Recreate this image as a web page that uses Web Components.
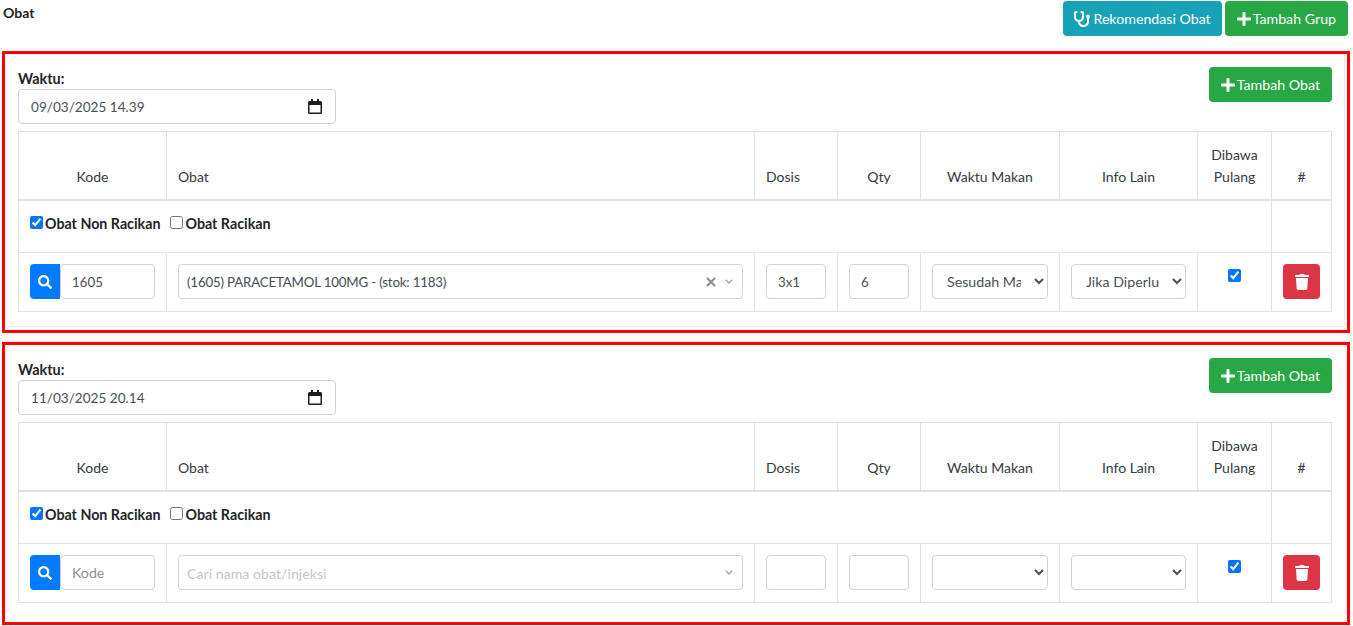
<!DOCTYPE html>
<html lang="id">
<head>
<meta charset="utf-8">
<title>Obat</title>
<style>
  html, body { margin: 0; background: #fff; }
  body { font-family: Lato, "Noto Sans", "Liberation Sans", sans-serif; font-size: 14px; color: #212529; }
</style>
</head>
<body>

<obat-page>
  <app-button slot="actions" variant="info" icon="stethoscope">Rekomendasi Obat</app-button>
  <app-button slot="actions" variant="success" icon="plus">Tambah Grup</app-button>

  <obat-group
    card-edge
    waktu="09/03/2025 14.39"
    kode="1605"
    obat="(1605) PARACETAMOL 100MG - (stok: 1183)"
    dosis="3x1"
    qty="6"
    makan="Sesudah Makan"
    info="Jika Diperlu"></obat-group>

  <obat-group waktu="11/03/2025 20.14"></obat-group>
</obat-page>

<script>
const iconPaths = Object.freeze({
  plus: [448, 'M416 208H272V64c0-17.67-14.33-32-32-32h-32c-17.67 0-32 14.33-32 32v144H32c-17.67 0-32 14.33-32 32v32c0 17.67 14.33 32 32 32h144v144c0 17.67 14.33 32 32 32h32c17.67 0 32-14.33 32-32V304h144c17.67 0 32-14.33 32-32v-32c0-17.67-14.33-32-32-32z'],
  search: [512, 'M505 442.7L405.3 343c-4.5-4.5-10.6-7-17-7H372c27.6-35.3 44-79.7 44-128C416 93.1 322.9 0 208 0S0 93.1 0 208s93.1 208 208 208c48.3 0 92.7-16.4 128-44v16.3c0 6.4 2.5 12.5 7 17l99.7 99.7c9.4 9.4 24.6 9.4 33.9 0l28.3-28.3c9.4-9.4 9.4-24.6.1-34zM208 336c-70.7 0-128-57.2-128-128 0-70.7 57.2-128 128-128 70.7 0 128 57.2 128 128 0 70.7-57.2 128-128 128z'],
  trash: [448, 'M432 32H312l-9.4-18.7A24 24 0 0 0 281.1 0H166.8a23.72 23.72 0 0 0-21.4 13.3L136 32H16A16 16 0 0 0 0 48v32a16 16 0 0 0 16 16h416a16 16 0 0 0 16-16V48a16 16 0 0 0-16-16zM53.2 467a48 48 0 0 0 47.9 45h245.8a48 48 0 0 0 47.9-45L416 128H32z'],
  stethoscope: [512, 'M447.1 112c-34.2.5-62.3 28.4-63 62.6-.5 24.3 12.5 45.6 32 56.8V344c0 57.3-50.2 104-112 104-60 0-109.2-44.1-111.9-99.2C265 333.8 320 269.2 320 192V36.6c0-11.4-8.1-21.3-19.3-23.5L237.8.5c-13-2.6-25.6 5.8-28.2 18.8L206.4 35c-2.6 13 5.8 25.6 18.8 28.2l30.7 6.1v121.4c0 52.9-42.2 96.7-95.1 97.2-53.4.5-96.8-42.7-96.8-96V69.4l30.7-6.1c13-2.6 21.4-15.2 18.8-28.2l-3.1-15.7C107.7 6.4 95.1-2 82.1.6L19.3 13C8.1 15.3 0 25.1 0 36.6V192c0 77.3 55.1 142 128.1 156.8C130.7 439.2 208.6 512 304 512c97 0 176-75.4 176-168V231.4c19.1-11.1 32-31.7 32-55.4 0-35.7-29.2-64.5-64.9-64zm.9 80c-8.800 0-16-7.200-16-16s7.200-16 16-16 16 7.200 16 16-7.200 16-16 16z']
})

const iconSvg = (name, size) => {
  const [w, d] = iconPaths[name]
  return `<svg width="${size * w / 512}" height="${size}" viewBox="0 0 ${w} 512" fill="currentColor" aria-hidden="true"><path d="${d}"/></svg>`
}

class AppButton extends HTMLElement {
  connectedCallback () {
    if (this.shadowRoot) return
    this.attachShadow({ mode: 'open' })
    const icon = this.getAttribute('icon')
    this.shadowRoot.innerHTML = `
      <style>
        :host {
          display: inline-flex;
          align-items: center;
          height: 35px;
          box-sizing: border-box;
          padding: 0 12px;
          gap: 2px;
          border-radius: 4px;
          color: #fff;
          font-size: 14.2px;
          white-space: nowrap;
        }
        :host([variant="info"]) { background: #17a2b8; padding: 0 11px; gap: 3px; }
        :host([variant="success"]) { background: #28a745; }
        svg { display: block; }
      </style>
      ${icon ? iconSvg(icon, 16) : ''}<slot></slot>
    `
  }
}

const groupTemplate = document.createElement('template')
groupTemplate.innerHTML = `
  <style>
    :host {
      display: block;
      box-sizing: border-box;
      height: 283px;
      border: 3px solid #f00;
      box-shadow: 0 -1.5px 0 #e6e8ea;
    }
    :host([card-edge]) { height: 282px; box-shadow: none; }
    .card {
      box-sizing: border-box;
      height: 100%;
      padding: 13px 13px 0 13px;
      margin-right: 2px;
    }
    :host([card-edge]) .card {
      height: 273px;
      padding-right: 12px;
      border-right: 1px solid #e9ebed;
      border-bottom: 1px solid #e9ebed;
      border-bottom-right-radius: 4px;
    }
    .top { display: flex; justify-content: space-between; align-items: flex-start; margin-bottom: 7px; }
    label.waktu { display: block; font-weight: 700; padding-top: 1px; line-height: 21px; font-size: 14.4px; }
    .date {
      display: flex;
      align-items: center;
      justify-content: space-between;
      box-sizing: border-box;
      width: 318px;
      height: 35px;
      padding: 0 13px 0 12px;
      border: 1px solid #ced4da;
      border-radius: 4px;
      color: #495057;
      font-size: 13.6px;
    }
    .waktu-isi { padding-top: 1px; }
    table {
      table-layout: fixed;
      border-collapse: collapse;
      width: 1313px;
      color: #212529;
    }
    th, td { border: 1px solid #dee2e6; padding: 11px 11px 12px; vertical-align: middle; }
    th {
      font-weight: 400;
      vertical-align: bottom;
      text-align: center;
      line-height: 22px;
      padding: 12px 6px 11px;
      border-bottom-width: 2px;
      font-size: 14px;
      color: #343a40;
    }
    th.left { text-align: left; padding-left: 11px; }
    tr.jenis td { height: 27px; padding: 9px 11px 15px; font-weight: 700; font-size: 14.25px; }
    tr.jenis label { display: inline-flex; align-items: center; gap: 1px; margin-right: 10px; }
    tr.jenis input { margin-bottom: 1px; }
    input[type="checkbox"] { margin: 0 1px 0 0; width: 13px; height: 13px; }
    tr.isi td { height: 35px; }
    .kode { display: flex; height: 35px; }
    .cari {
      display: flex;
      align-items: center;
      justify-content: center;
      flex: 0 0 30px;
      background: #007bff;
      color: #fff;
      border-radius: 4px 0 0 4px;
    }
    .kode input { flex: 1; min-width: 0; border-radius: 0 4px 4px 0; border-left: 0; padding-left: 12px; }
    input[type="text"], select {
      display: block;
      box-sizing: border-box;
      height: 35px;
      width: 100%;
      border: 1px solid #ced4da;
      border-radius: 4px;
      background: #fff;
      color: #495057;
      font: inherit;
      font-size: 13.3px;
      outline: 0;
    }
    input[type="text"] { padding: 1px 11px 0; }
    input::placeholder { color: #8a9097; opacity: 1; font-size: 14.2px; }
    select { padding: 0 10px; font-size: 14.2px; }
    .pilih {
      display: flex;
      align-items: center;
      box-sizing: border-box;
      height: 35px;
      padding: 0 9px 0 8px;
      border: 1px solid #ced4da;
      border-radius: 4px;
      color: #444c54;
      font-size: 13.3px;
      letter-spacing: -.18px;
    }
    .pilih .isi { flex: 1; padding-top: 1px; }
    .pilih.kosong { font-size: 14.2px; letter-spacing: 0; }
    .pilih.kosong .isi { color: #c4c6c9; }
    .pilih svg { display: block; }
    .hapus { color: #8f8f8f; margin-right: 9px; }
    .turun { color: #a0a3a6; }
    td.bawa { text-align: center; vertical-align: top; padding: 16px 0 0; line-height: 0; }
    td.bawa input { margin: 0; }
    .buang {
      display: flex;
      align-items: center;
      justify-content: center;
      width: 37px;
      height: 35px;
      background: #dc3545;
      color: #fff;
      border-radius: 4px;
    }
  </style>
  <div class="card">
    <div class="top">
      <div>
        <label class="waktu">Waktu:</label>
        <div class="date">
          <span class="waktu-isi"></span>
          <svg width="14" height="15" viewBox="0 0 14 15" aria-hidden="true">
            <path d="M3 0h2v2h4V0h2v2h1.500A1.500 1.500 0 0 1 14 3.500v10a1.500 1.500 0 0 1-1.500 1.500h-11A1.500 1.500 0 0 1 0 13.500v-10A1.500 1.500 0 0 1 1.500 2H3zM1.500 6v7.500h11V6z" fill="#1d1d1d"/>
          </svg>
        </div>
      </div>
      <app-button variant="success" icon="plus">Tambah Obat</app-button>
    </div>
    <table>
      <colgroup>
        <col style="width:148px"><col style="width:588px"><col style="width:83px"><col style="width:83px">
        <col style="width:139px"><col style="width:138px"><col style="width:74px"><col style="width:60px">
      </colgroup>
      <thead>
        <tr>
          <th>Kode</th><th class="left">Obat</th><th class="left">Dosis</th><th>Qty</th>
          <th>Waktu Makan</th><th>Info Lain</th><th>Dibawa Pulang</th><th>#</th>
        </tr>
      </thead>
      <tbody>
        <tr class="jenis">
          <td colspan="7">
            <label><input type="checkbox" checked>Obat Non Racikan</label><label><input type="checkbox">Obat Racikan</label>
          </td>
          <td></td>
        </tr>
        <tr class="isi">
          <td><div class="kode"><span class="cari"></span><input type="text" class="f-kode" placeholder="Kode"></div></td>
          <td class="f-obat"></td>
          <td><input type="text" class="f-dosis"></td>
          <td><input type="text" class="f-qty"></td>
          <td><select class="f-makan"></select></td>
          <td><select class="f-info"></select></td>
          <td class="bawa"><input type="checkbox" checked></td>
          <td><span class="buang"></span></td>
        </tr>
      </tbody>
    </table>
  </div>
`

class ObatGroup extends HTMLElement {
  connectedCallback () {
    if (this.shadowRoot) return
    this.attachShadow({ mode: 'open' })
    this.shadowRoot.appendChild(groupTemplate.content.cloneNode(true))
    const $ = (sel) => this.shadowRoot.querySelector(sel)
    const attr = (name) => this.getAttribute(name) || ''

    $('.waktu-isi').textContent = attr('waktu')
    $('.cari').innerHTML = iconSvg('search', 14)
    $('.buang').innerHTML = iconSvg('trash', 16)
    $('.f-kode').setAttribute('value', attr('kode'))
    $('.f-dosis').setAttribute('value', attr('dosis'))
    $('.f-qty').setAttribute('value', attr('qty'))

    const chevron = '<svg class="turun" width="8" height="5" viewBox="0 0 8 5" fill="none" stroke="currentColor" stroke-width="1.300"><path d="M.8.8 4 4l3.200-3.200"/></svg>'
    const cross = '<svg class="hapus" width="10" height="10" viewBox="0 0 10 10" fill="none" stroke="currentColor" stroke-width="2.200"><path d="M1 1l8 8M9 1l-8 8"/></svg>'
    const obat = attr('obat')
    $('.f-obat').innerHTML = `
      <div class="pilih ${obat ? '' : 'kosong'}">
        <span class="isi"></span>${obat ? cross : ''}${chevron}
      </div>`
    $('.pilih .isi').textContent = obat || 'Cari nama obat/injeksi'

    for (const [sel, name] of [['.f-makan', 'makan'], ['.f-info', 'info']]) {
      const option = document.createElement('option')
      option.textContent = attr(name)
      $(sel).appendChild(option)
    }
  }
}

const pageTemplate = document.createElement('template')
pageTemplate.innerHTML = `
  <style>
    :host { display: block; padding: 1px 3px 0 2px; }
    header { display: flex; justify-content: space-between; align-items: flex-start; height: 50px; }
    h1 { margin: 2px 0 0 1px; font-size: 14.1px; line-height: 20px; font-weight: 700; }
    .actions { display: flex; gap: 3px; margin-right: 2px; }
    .groups { display: flex; flex-direction: column; gap: 9px; }
  </style>
  <header>
    <h1>Obat</h1>
    <div class="actions"><slot name="actions"></slot></div>
  </header>
  <div class="groups"><slot></slot></div>
`

class ObatPage extends HTMLElement {
  constructor () {
    super()
    this.attachShadow({ mode: 'open' })
    this.shadowRoot.appendChild(pageTemplate.content.cloneNode(true))
  }
}

window.customElements.define('app-button', AppButton)
window.customElements.define('obat-group', ObatGroup)
window.customElements.define('obat-page', ObatPage)
</script>
</body>
</html>
